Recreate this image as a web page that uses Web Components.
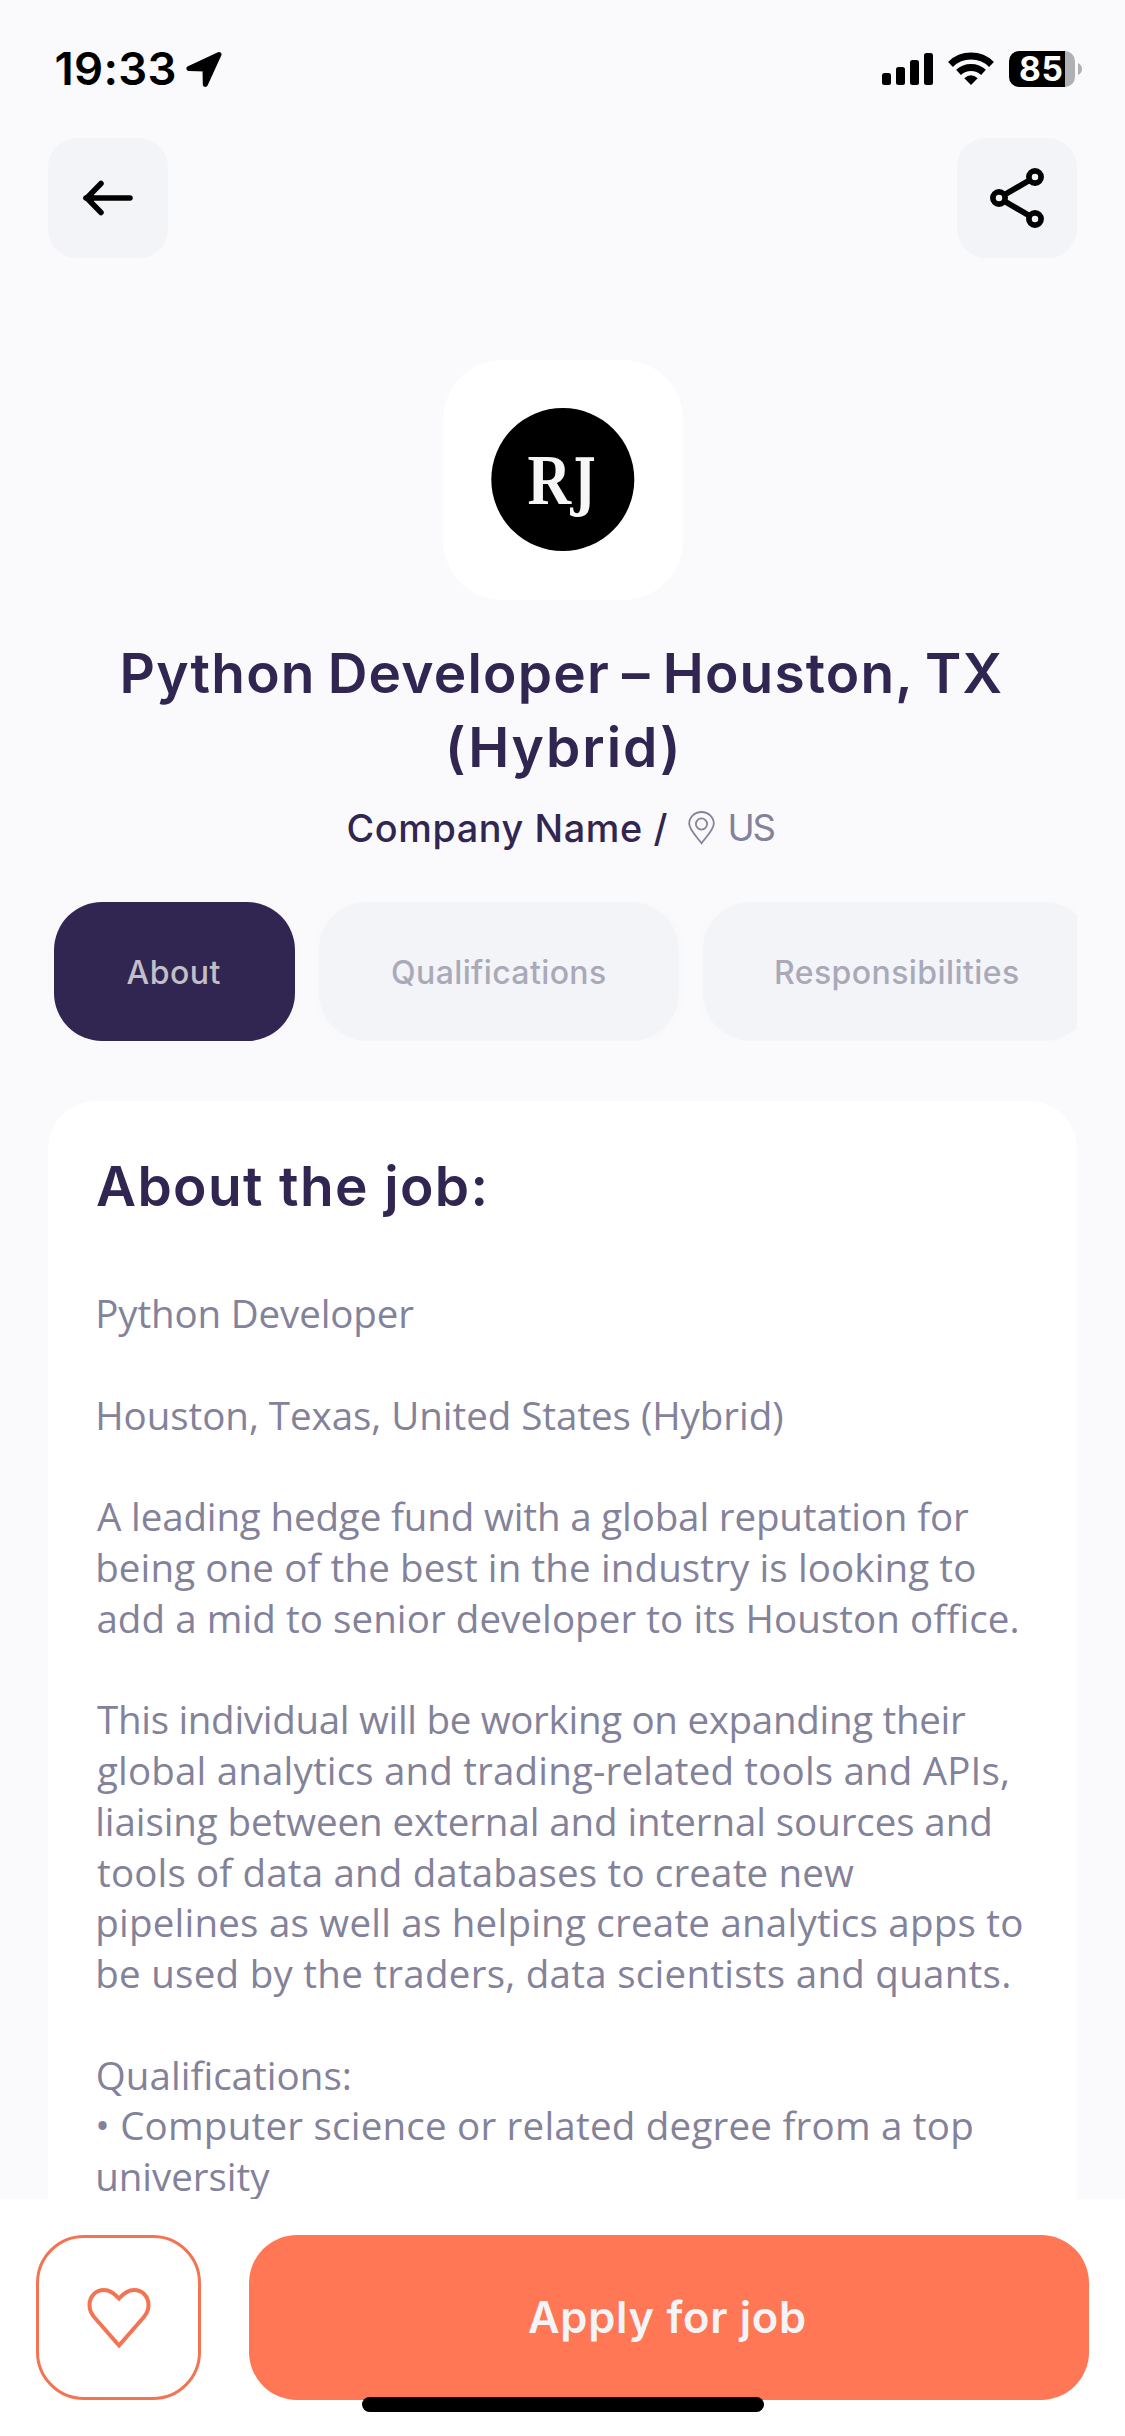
<!DOCTYPE html>
<html lang="en">
<head>
<meta charset="utf-8">
<title>Python Developer – Houston, TX (Hybrid)</title>
<style>
html,body{margin:0;padding:0}
body{width:1125px;height:2436px;overflow:hidden;background:#fafafd;font-family:Inter,"Liberation Sans",sans-serif;color:#312651}
</style>
</head>
<body>
<job-screen></job-screen>
<script>
const define=(name,html,after)=>{
  const t=document.createElement('template');t.innerHTML=html;
  customElements.define(name,class extends HTMLElement{
    constructor(){super();this.attachShadow({mode:'open'}).append(t.content.cloneNode(true));}
    connectedCallback(){after&&after(this);}
  });
};

/* One line of text, tracked so that its glyphs span exactly the `span` width.
   `lead` is the share of the first glyph's side bearing that is trimmed. */
const ctx=document.createElement('canvas').getContext('2d');
define('fit-line',`<style>:host{display:block;white-space:nowrap;font-variant-ligatures:none}span{display:inline-block}</style><span></span>`,el=>{
  const s=el.shadowRoot.querySelector('span');
  const text=el.getAttribute('text');s.textContent=text;
  const target=+el.getAttribute('span');
  const lead=+(el.getAttribute('lead')||1);
  const cs=getComputedStyle(s);
  ctx.font=`${cs.fontWeight} ${cs.fontSize} ${cs.fontFamily}`;
  const a=ctx.measureText(text[0]),z=ctx.measureText(text.at(-1));
  const left=-a.actualBoundingBoxLeft,right=z.width-z.actualBoundingBoxRight;
  const ink=s.getBoundingClientRect().width-left-right;
  s.style.letterSpacing=(target-ink)/(text.length-1)+'px';
  s.style.marginLeft=-left*lead+'px';
  el.style.width=target+'px';
});

define('status-bar',`<style>
:host{display:flex;justify-content:space-between;height:138px;box-sizing:border-box;padding:41px 43px 0 56.500px;color:#000}
.l,.r{display:flex;height:56px;align-items:center}
.l fit-line{font-size:45.5px;font-weight:560;line-height:56px}
.l svg{margin-left:11.500px}
.bat{position:relative;width:73px;height:36px;margin-left:15px}
.bat svg{display:block}
.bat fit-line{position:absolute;left:11px;top:-2px;font-size:33.500px;line-height:40px;font-weight:700;color:#fff}
</style>
<div class="l"><fit-line text="19:33" span="118"></fit-line>
<svg width="36" height="36" viewBox="186 51 36 36"><path d="M219 54.5 L189 68.6 L205 69 L205.3 84.5 Z" stroke="#000" stroke-width="5" stroke-linejoin="round"/></svg></div>
<div class="r">
<svg width="112" height="36" viewBox="882 51 112 36"><rect x="882" y="73" width="9" height="12" rx="2.5"/><rect x="896" y="67" width="9" height="18" rx="2.5"/><rect x="910" y="60" width="9" height="25" rx="2.5"/><rect x="924" y="53" width="9" height="32" rx="2.5"/>
<g fill="none" stroke="#000" stroke-width="7"><path d="M950.5 64.4 A29.5 29.5 0 0 1 991.500 64.4"/><path d="M958.500 72.3 A18.5 18.5 0 0 1 983.500 72.3"/></g><path d="M971 85 L964.300 78.300 Q971 72 977.700 78.300 Z"/></svg>
<div class="bat"><svg width="73" height="36"><path d="M10 0H56V36H10A10 10 0 0 1 0 26V10A10 10 0 0 1 10 0"/><path fill="#b0afb3" d="M56 0A10 10 0 0 1 66 10V26A10 10 0 0 1 56 36ZM69 12Q73 14 73 18T69 24Z"/></svg><fit-line text="85" span="41.500"></fit-line></div>
</div>`);

define('icon-button',`<style>:host{display:flex;width:120px;height:120px;border-radius:29px;background:#f3f4f8;align-items:center;justify-content:center}</style><slot></slot>`);

define('top-nav',`<style>:host{display:flex;justify-content:space-between;padding:0 48px}svg{display:block}</style>
<icon-button><svg width="120" height="120" fill="none" stroke="#000" stroke-width="5.500" stroke-linecap="round"><path d="M82 60H38"/><path d="M53 45.500L38.800 60L53 74.500"/><path d="M36 60L46 51V69Z" fill="#000" stroke="none"/></svg></icon-button>
<icon-button><svg width="120" height="120" fill="none" stroke="#000" stroke-width="5.700"><path d="M42 60L78 39M42 60L78 81"/><g fill="#f3f4f8"><circle cx="42" cy="60" r="6.100"/><circle cx="78" cy="39" r="6.100"/><circle cx="78" cy="81" r="6.100"/></g></svg></icon-button>`);

define('company-logo',`<style>:host{display:flex;width:240px;height:240px;border-radius:60px;background:#fff;align-items:center;justify-content:center}</style>
<svg width="240" height="240"><circle cx="119.800" cy="119.500" r="71.500"/><g fill="#f6f6f6"><text transform="translate(84.500 143.500) scale(.84 1)" font-family="Liberation Serif,serif" font-weight="700" font-size="72">R</text><text transform="translate(130.500 143.500) scale(.82 1)" font-family="DejaVu Serif Condensed,DejaVu Serif,serif" font-weight="700" font-size="64">J</text></g></svg>`);

define('job-head',`<style>
:host{display:flex;flex-direction:column;align-items:center;padding-top:102px}
.t{display:flex;flex-direction:column;align-items:center;margin-top:36px;font-size:55px;line-height:74px;font-weight:600;word-spacing:-3px}
.c{display:flex;align-items:center;height:50px;margin-top:19px;font-size:37.800px;line-height:50px;font-weight:500;padding-right:2px}
.c svg{margin:0 16px 0 20px}.us{color:#83829a;font-weight:400;font-size:36.500px}
</style>
<company-logo></company-logo>
<div class="t"><fit-line text="Python Developer – Houston, TX" span="878"></fit-line><fit-line text="(Hybrid)" span="227"></fit-line></div>
<div class="c"><fit-line text="Company Name /" span="319"></fit-line>
<svg width="27" height="34" viewBox="0 0 27 34" fill="none" stroke="#83829a" stroke-width="1.800"><path d="M13.500 32.200C8 25 1.200 18.500 1.200 12.800A12.300 11.800 0 0 1 25.800 12.800C25.800 18.500 19 25 13.500 32.200Z"/><circle cx="13.500" cy="13" r="5.600"/></svg>
<fit-line class="us" text="US" span="44"></fit-line></div>`);

define('tab-chip',`<style>
:host{display:flex;flex:none;box-sizing:border-box;height:139px;padding:2px 74px 0 73px;border-radius:48px;background:#f3f4f8;color:#aaa9b8;align-items:center;font-size:32px;line-height:46px;font-weight:500;box-shadow:0 0 16px rgba(49,38,81,.015)}
:host([active]){background:#312651;color:#c1c0c8;padding-left:72.500px;padding-right:74.500px}
</style><slot></slot>`);

define('tab-strip',`<style>:host{display:flex;gap:24px;height:139px;margin:49px 48px 0;padding-left:6px;overflow:hidden}</style>
<tab-chip active><fit-line text="About" span="94"></fit-line></tab-chip>
<tab-chip><fit-line text="Qualifications" span="213"></fit-line></tab-chip>
<tab-chip><fit-line text="Responsibilities" span="242"></fit-line></tab-chip>`);

const paras=[
 [['Python Developer',316]],
 [['Houston, Texas, United States (Hybrid)',684]],
 [['A leading hedge fund with a global reputation for',872],['being one of the best in the industry is looking to',877],['add a mid to senior developer to its Houston office.',920]],
 [['This individual will be working on expanding their',869],['global analytics and trading-related tools and APIs,',911],['liaising between external and internal sources and',892],['tools of data and databases to create new',757],['pipelines as well as helping create analytics apps to',924],['be used by the traders, data scientists and quants.',911]],
 [['Qualifications:',252],['• Computer science or related degree from a top',874],['university',172]]
];
define('about-card',`<style>
:host{display:block;flex:1;min-height:0;overflow:hidden;margin:60px 48px 0;padding:48px 0 0 49px;box-sizing:border-box;background:#fff;border-radius:48px 48px 0 0}
.h{font-size:55px;line-height:74px;font-weight:630;margin-bottom:65px}
section{font:400 38.500px/50.780px "Open Sans",sans-serif;color:#83829a;margin-bottom:50.780px}
</style><fit-line class="h" text="About the job:" span="387.500"></fit-line>`+
paras.map(p=>`<section>${p.map(([t,w])=>`<fit-line lead=".6" text="${t}" span="${w}"></fit-line>`).join('')}</section>`).join(''));

define('action-bar',`<style>
:host{display:flex;position:relative;flex:none;height:237px;box-sizing:border-box;background:#fff;padding:36px 36px 0;gap:48px}
.like{width:165px;height:165px;box-sizing:border-box;border:3px solid #f37453;border-radius:48px;display:flex;align-items:center;justify-content:center}
.apply{flex:1;height:165px;box-sizing:border-box;padding:0 4px 2px 0;border-radius:48px;background:#ff7754;color:#f3f4f8;display:flex;align-items:center;justify-content:center;font-size:43.500px;line-height:60px;font-weight:600}
.home{position:absolute;left:362px;top:198px;width:402px;height:15px;border-radius:8px;background:#000}
</style>
<div class="like"><svg width="66" height="62" viewBox="0 0 66 62" fill="none" stroke="#f37453" stroke-width="4"><path d="M33 58.500L8.300 30.200C4.200 25.500 3.500 22 3.500 18C3.500 9.500 9.500 3 18 3C23.500 3 28.500 6.500 33 11.500C37.500 6.500 42.500 3 48 3C56.500 3 62.500 9.500 62.500 18C62.500 22 61.800 25.500 57.700 30.200Z"/></svg></div>
<div class="apply"><fit-line text="Apply for job" span="276"></fit-line></div>
<div class="home"></div>`);

define('job-screen',`<style>:host{display:flex;flex-direction:column;width:1125px;height:2436px;overflow:hidden}</style>
<status-bar></status-bar><top-nav></top-nav><job-head></job-head><tab-strip></tab-strip><about-card></about-card><action-bar></action-bar>`);
</script>
</body>
</html>
